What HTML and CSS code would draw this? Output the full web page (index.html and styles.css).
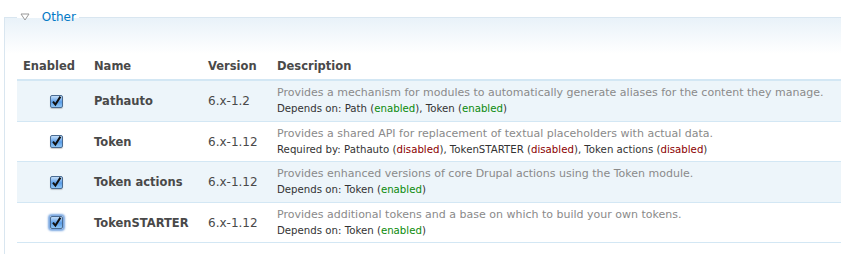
FILE: index.html
```html
<!DOCTYPE html>
<html lang="en">
<head>
    <meta charset="UTF-8">
    <title>Modules</title>
    <link rel="stylesheet" href="styles.css">
</head>
<body>
    <fieldset class="module-group">
        <legend>
            <svg class="toggle" width="10" height="8" viewBox="0 0 10 8"><path d="M1 1 H9 L5 7 Z" fill="#fff" stroke="#999" stroke-width="1"/></svg>
            <a href="#" class="legend-link">Other</a>
        </legend>
        <table class="modules">
            <thead>
                <tr>
                    <th class="col-enabled">Enabled</th>
                    <th class="col-name">Name</th>
                    <th class="col-version">Version</th>
                    <th>Description</th>
                </tr>
            </thead>
            <tbody>
                <tr class="odd">
                    <td class="checkbox"><span class="check"></span></td>
                    <td class="name">Pathauto</td>
                    <td class="version">6.x-1.2</td>
                    <td>
                        <div class="desc">Provides a mechanism for modules to automatically generate aliases for the content they manage.</div>
                        <div class="deps">Depends on: Path (<span class="on">enabled</span>), Token (<span class="on">enabled</span>)</div>
                    </td>
                </tr>
                <tr class="even">
                    <td class="checkbox"><span class="check"></span></td>
                    <td class="name">Token</td>
                    <td class="version">6.x-1.12</td>
                    <td>
                        <div class="desc">Provides a shared API for replacement of textual placeholders with actual data.</div>
                        <div class="deps">Required by: Pathauto (<span class="off">disabled</span>), TokenSTARTER (<span class="off">disabled</span>), Token actions (<span class="off">disabled</span>)</div>
                    </td>
                </tr>
                <tr class="odd">
                    <td class="checkbox"><span class="check"></span></td>
                    <td class="name">Token actions</td>
                    <td class="version">6.x-1.12</td>
                    <td>
                        <div class="desc">Provides enhanced versions of core Drupal actions using the Token module.</div>
                        <div class="deps">Depends on: Token (<span class="on">enabled</span>)</div>
                    </td>
                </tr>
                <tr class="even">
                    <td class="checkbox"><span class="check focus"></span></td>
                    <td class="name">TokenSTARTER</td>
                    <td class="version">6.x-1.12</td>
                    <td>
                        <div class="desc">Provides additional tokens and a base on which to build your own tokens.</div>
                        <div class="deps">Depends on: Token (<span class="on">enabled</span>)</div>
                    </td>
                </tr>
            </tbody>
        </table>
    </fieldset>
</body>
</html>
```

FILE: styles.css
```css
html, body {
    margin: 0;
    overflow: hidden;
    background: #fff;
}
body {
    font-family: "DejaVu Sans", Verdana, sans-serif;
    color: #494949;
}
/* fieldset */
.module-group {
    margin: 10px 0 0 4px;
    padding: 0 0 40px 12px;
    width: 900px;
    border: 1px solid #d9e6f0;
    border-right: none;
    background: linear-gradient(#e9f2f9, #fff 36px);
}
.module-group legend {
    padding: 0 3px;
    margin-left: 0;
    font-size: 12px;
    line-height: 14px;
}
.toggle {
    vertical-align: 0;
    margin-right: 8px;
}
.legend-link {
    color: #027ac6;
    text-decoration: none;
}
/* table */
.modules {
    width: 100%;
    border-collapse: collapse;
    margin-top: 35px;
}
.modules th {
    text-align: left;
    font-size: 11.5px;
    font-weight: bold;
    padding: 0 6px 6px;
    border-bottom: 2px solid #d3e7f4;
    line-height: 14px;
}
.col-enabled { width: 59px; }
.col-name { width: 102px; }
.col-version { width: 57px; }
.modules td {
    padding: 4px 6px 3px;
    line-height: 16.25px;
    font-size: 11px;
    border-bottom: 1px solid #d3e7f4;
    vertical-align: middle;
}
.modules tr.odd td { background: #edf5fa; }
.modules tr.even td { background: #fff; }
.modules td.name {
    font-weight: bold;
    font-size: 11.5px;
}
.modules td.version { font-size: 12px; }
.modules td.checkbox { text-align: center; padding-left: 13px; }
.desc { color: #8a8a8a; }
.deps { color: #333; font-size: 10.2px; }
.on { color: #0a8a0a; }
.off { color: #8b0000; }
/* checkbox */
.check {
    display: inline-block;
    width: 11px;
    height: 11px;
    vertical-align: middle;
    border: 1px solid #4a6b91;
    border-radius: 2px;
    background:
        url("data:image/svg+xml;utf8,<svg xmlns='http://www.w3.org/2000/svg' width='11' height='11' viewBox='0 0 11 11'><path d='M2 5.6 L4.4 8.6 L9.4 0.6' fill='none' stroke='%23111' stroke-width='2'/></svg>") no-repeat center,
        linear-gradient(#c4def8, #5a9de8 55%, #8fc6f5);
    box-shadow: 0 1px 1px rgba(0,0,0,0.2);
}
.check.focus {
    box-shadow: 0 0 2px 2px #7aa7e0;
}
```
